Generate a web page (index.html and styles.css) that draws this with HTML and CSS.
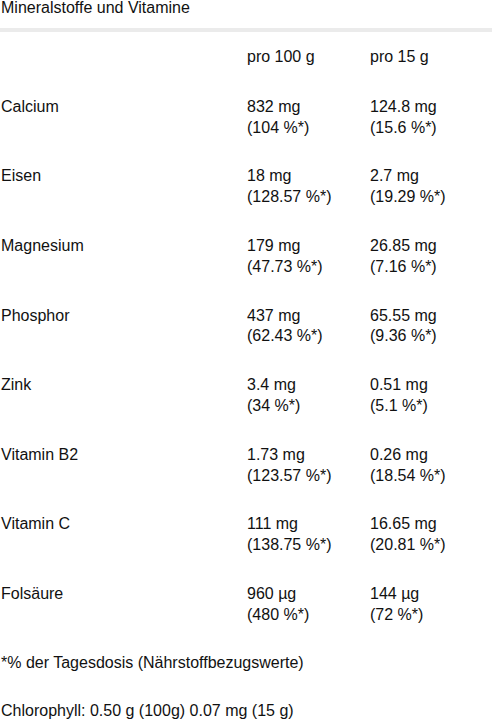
FILE: index.html
```html
<!DOCTYPE html>
<html lang="de">
<head>
<meta charset="utf-8">
<title>Mineralstoffe und Vitamine</title>
<link rel="stylesheet" href="styles.css">
</head>
<body>
<div class="page">
  <h2 class="title">Mineralstoffe und Vitamine</h2>
  <div class="divider"></div>
  <table class="nutri">
    <colgroup><col class="c-name"><col class="c-val"><col class="c-val"></colgroup>
    <thead>
      <tr><th></th><th>pro 100 g</th><th>pro 15 g</th></tr>
    </thead>
    <tbody>
      <tr><td>Calcium</td><td>832 mg<br>(104 %*)</td><td>124.8 mg<br>(15.6 %*)</td></tr>
      <tr><td>Eisen</td><td>18 mg<br>(128.57 %*)</td><td>2.7 mg<br>(19.29 %*)</td></tr>
      <tr><td>Magnesium</td><td>179 mg<br>(47.73 %*)</td><td>26.85 mg<br>(7.16 %*)</td></tr>
      <tr><td>Phosphor</td><td>437 mg<br>(62.43 %*)</td><td>65.55 mg<br>(9.36 %*)</td></tr>
      <tr><td>Zink</td><td>3.4 mg<br>(34 %*)</td><td>0.51 mg<br>(5.1 %*)</td></tr>
      <tr><td>Vitamin B2</td><td>1.73 mg<br>(123.57 %*)</td><td>0.26 mg<br>(18.54 %*)</td></tr>
      <tr><td>Vitamin C</td><td>111 mg<br>(138.75 %*)</td><td>16.65 mg<br>(20.81 %*)</td></tr>
      <tr><td>Folsäure</td><td>960 µg<br>(480 %*)</td><td>144 µg<br>(72 %*)</td></tr>
    </tbody>
  </table>
  <p class="note">*% der Tagesdosis (Nährstoffbezugswerte)</p>
  <p class="extra">Chlorophyll: 0.50 g (100g) 0.07 mg (15 g)</p>
</div>
</body>
</html>
```

FILE: styles.css
```css
html, body {
  margin: 0;
  padding: 0;
  background: #ffffff;
}
body {
  font-family: "Liberation Sans", Arial, sans-serif;
  font-size: 16px;
  line-height: 20.8px;
  color: #111111;
}
.page {
  width: 492px;
  overflow: hidden;
}
.title {
  margin: -2px 0 0 0;
  padding-left: 1px;
  font-size: 16px;
  font-weight: normal;
  line-height: 20.8px;
}
.divider {
  margin-top: 9px;
  height: 4px;
  background: #ebebeb;
}
.nutri {
  width: 100%;
  margin-top: 1.6px;
  border-collapse: collapse;
  table-layout: fixed;
}
.c-name { width: 50%; }
.c-val { width: 25%; }
.nutri th,
.nutri td {
  padding: 14px 0 14px 1px;
  text-align: left;
  vertical-align: top;
  font-weight: normal;
}
.nutri thead th {
  padding-bottom: 14.6px;
}
.note {
  margin: 13px 0 0 0;
  padding-left: 1px;
}
.extra {
  margin: 28px 0 0 0;
  padding-left: 1px;
}
```
